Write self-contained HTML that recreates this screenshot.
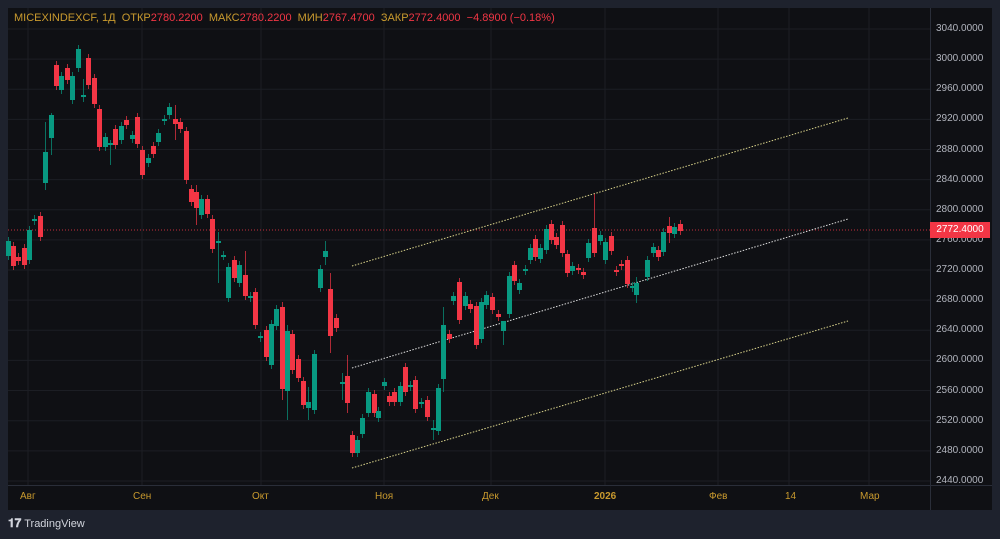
<!DOCTYPE html>
<html><head><meta charset="utf-8"><style>
body{margin:0;width:1000px;height:539px;background:#1e222d;overflow:hidden;font-family:"Liberation Sans",sans-serif}
#c{position:absolute;left:8px;top:8px;width:984px;height:502px;background:#0f1014}
.hd{position:absolute;left:14px;top:12px;font-size:11px;color:#c99a2e;white-space:nowrap}
.hd b{font-weight:normal;color:#f23645}
.pl{position:absolute;left:936px;font-size:10px;color:#b2b5be}
.tl{position:absolute;top:491px;font-size:10px;color:#c99a2e}
</style></head><body>
<div id="c"></div>
<svg id="s" width="1000" height="539" style="position:absolute;left:0;top:0"></svg>
<div class="hd">MICEXINDEXCF, 1Д &nbsp;ОТКР<b>2780.2200</b> &nbsp;МАКС<b>2780.2200</b> &nbsp;МИН<b>2767.4700</b> &nbsp;ЗАКР<b>2772.4000</b> &nbsp;<b>−4.8900 (−0.18%)</b></div>
<div id="pls"></div>
<div style="position:absolute;left:930px;top:222px;width:60px;height:16px;background:#f23645;color:#fff;font-size:10px;line-height:16px;text-align:center">2772.4000</div>
<div class="tl" style="left:20px">Авг</div>
<div class="tl" style="left:133px">Сен</div>
<div class="tl" style="left:252px">Окт</div>
<div class="tl" style="left:375px">Ноя</div>
<div class="tl" style="left:482px">Дек</div>
<div class="tl" style="left:594px;font-weight:bold">2026</div>
<div class="tl" style="left:709px">Фев</div>
<div class="tl" style="left:785px">14</div>
<div class="tl" style="left:860px">Мар</div>
<div style="position:absolute;left:8px;top:516px;color:#d1d4dc;font-size:11px"><b style="font-size:12px">𝟏𝟕</b> TradingView</div>
<script>
var s=document.getElementById('s'),h='';
var P='',ps=document.getElementById('pls');
for(var i=0;i<16;i++){var y=29+i*30.13;h+='<line x1="8" x2="930" y1="'+y+'" y2="'+y+'" stroke="#1c1e24"/>';
P+='<div class="pl" style="top:'+(y-6)+'px">'+(3040-i*40)+'.0000</div>';}
ps.innerHTML=P;
[28,142,261,384,491,605,718,789,869].forEach(function(x){h+='<line y1="8" y2="485" x1="'+x+'" x2="'+x+'" stroke="#1c1e24"/>';});
h+='<line x1="8" x2="992" y1="485.5" y2="485.5" stroke="#2a2e39"/><line x1="930.5" x2="930.5" y1="8" y2="510" stroke="#2a2e39"/>';
h+='<line x1="8" x2="930" y1="230" y2="230" stroke="#f23645" stroke-dasharray="1 2" opacity=".8"/>';
h+='<line x1="352" y1="266" x2="848" y2="118" stroke="#d8d28a" stroke-dasharray="1.5 1.5"/>';
h+='<line x1="352" y1="368" x2="848" y2="219" stroke="#dddddd" stroke-dasharray="1.5 1.5"/>';
h+='<line x1="352" y1="468" x2="848" y2="321" stroke="#d8d28a" stroke-dasharray="1.5 1.5"/>';
var d=[[8,241,256,1],[13,246,266,0],[18,257,261,0],[24,248,265,0],[29,230,260,1],[34,219,221,1],[40,216,237,0],[45,152,183,1,122,190],[51,115,138,1,113,155],[56,65,86,0],[61,76,90,1],[67,68,80,0],[72,76,100,1],[78,49,68,1],[83,95,97,1,79,102],[88,58,85,0],[94,78,104,0],[99,109,147,0],[105,137,147,1],[110,143,145,1,140,165],[115,129,145,0],[121,126,140,1],[126,120,125,0],[132,135,139,1],[137,117,144,0],[142,150,175,0],[148,158,163,1],[153,146,154,0],[158,133,142,1],[164,119,121,1],[169,107,115,1],[175,119,124,0,105,140],[180,122,129,0],[186,131,180,0],[191,189,202,0],[196,192,208,0,185,225],[201,199,215,1],[207,199,214,0],[212,219,249,0],[218,241,243,1,232,283],[223,255,256,1],[228,267,298,1],[234,260,278,0],[239,265,283,1],[245,275,296,0,251,300],[250,296,298,1],[255,292,325,0],[260,336,338,1],[266,330,357,0],[271,324,365,1],[276,309,326,1],[282,307,389,0,302,400],[287,331,391,1,325,420],[292,334,370,0],[298,359,378,0],[303,381,405,0],[308,402,408,1,387,420],[314,354,410,1],[320,269,288,1],[325,251,257,1,241,265],[330,289,336,0,273,353],[336,318,328,0],[342,382,384,1,373,400],[347,376,403,0,355,413],[352,435,453,0],[357,440,453,1],[362,418,434,1],[368,392,413,1],[374,394,413,0],[378,411,418,1],[384,382,386,1],[389,396,402,0],[394,392,402,0],[400,386,402,1],[405,367,392,0],[410,385,387,1],[415,380,409,0],[421,402,404,1],[427,400,417,0],[433,428,430,1,420,440],[438,388,431,1],[443,325,379,1,307,392],[449,334,339,0],[453,296,301,1],[459,282,320,0],[465,296,306,1],[470,304,309,0],[476,306,345,0],[481,302,339,1],[486,295,305,1],[492,297,310,0],[498,314,317,0],[503,321,331,1,321,345],[509,276,314,1],[514,265,281,0],[519,283,290,1],[525,269,271,1],[530,248,260,1],[535,239,257,0],[540,248,259,1],[546,229,250,1],[551,224,240,0],[556,237,245,0],[562,225,253,0],[567,254,273,0],[572,266,271,1],[578,268,270,0],[583,272,275,0],[588,243,258,1],[594,228,253,0,194,257],[600,235,241,1],[605,242,260,1],[611,236,251,0],[616,270,272,0],[621,264,266,0],[627,260,284,0],[632,286,288,1],[636,283,295,1,277,303],[647,260,277,1],[653,247,253,1],[658,250,257,0],[663,232,252,1],[669,226,233,0,217,243],[674,227,234,1],[680,224,231,0]];
d.forEach(function(c){var col=c[3]?'#089981':'#f23645',hi=c[4]||c[1]-4,lo=c[5]||c[2]+4;
h+='<line x1="'+(c[0]+0.5)+'" x2="'+(c[0]+0.5)+'" y1="'+hi+'" y2="'+lo+'" stroke="'+col+'" opacity=".7"/>';
h+='<rect x="'+(c[0]-2)+'" y="'+c[1]+'" width="5" height="'+Math.max(2,c[2]-c[1])+'" fill="'+col+'"/>';});
s.innerHTML=h;
</script>
</body></html>
